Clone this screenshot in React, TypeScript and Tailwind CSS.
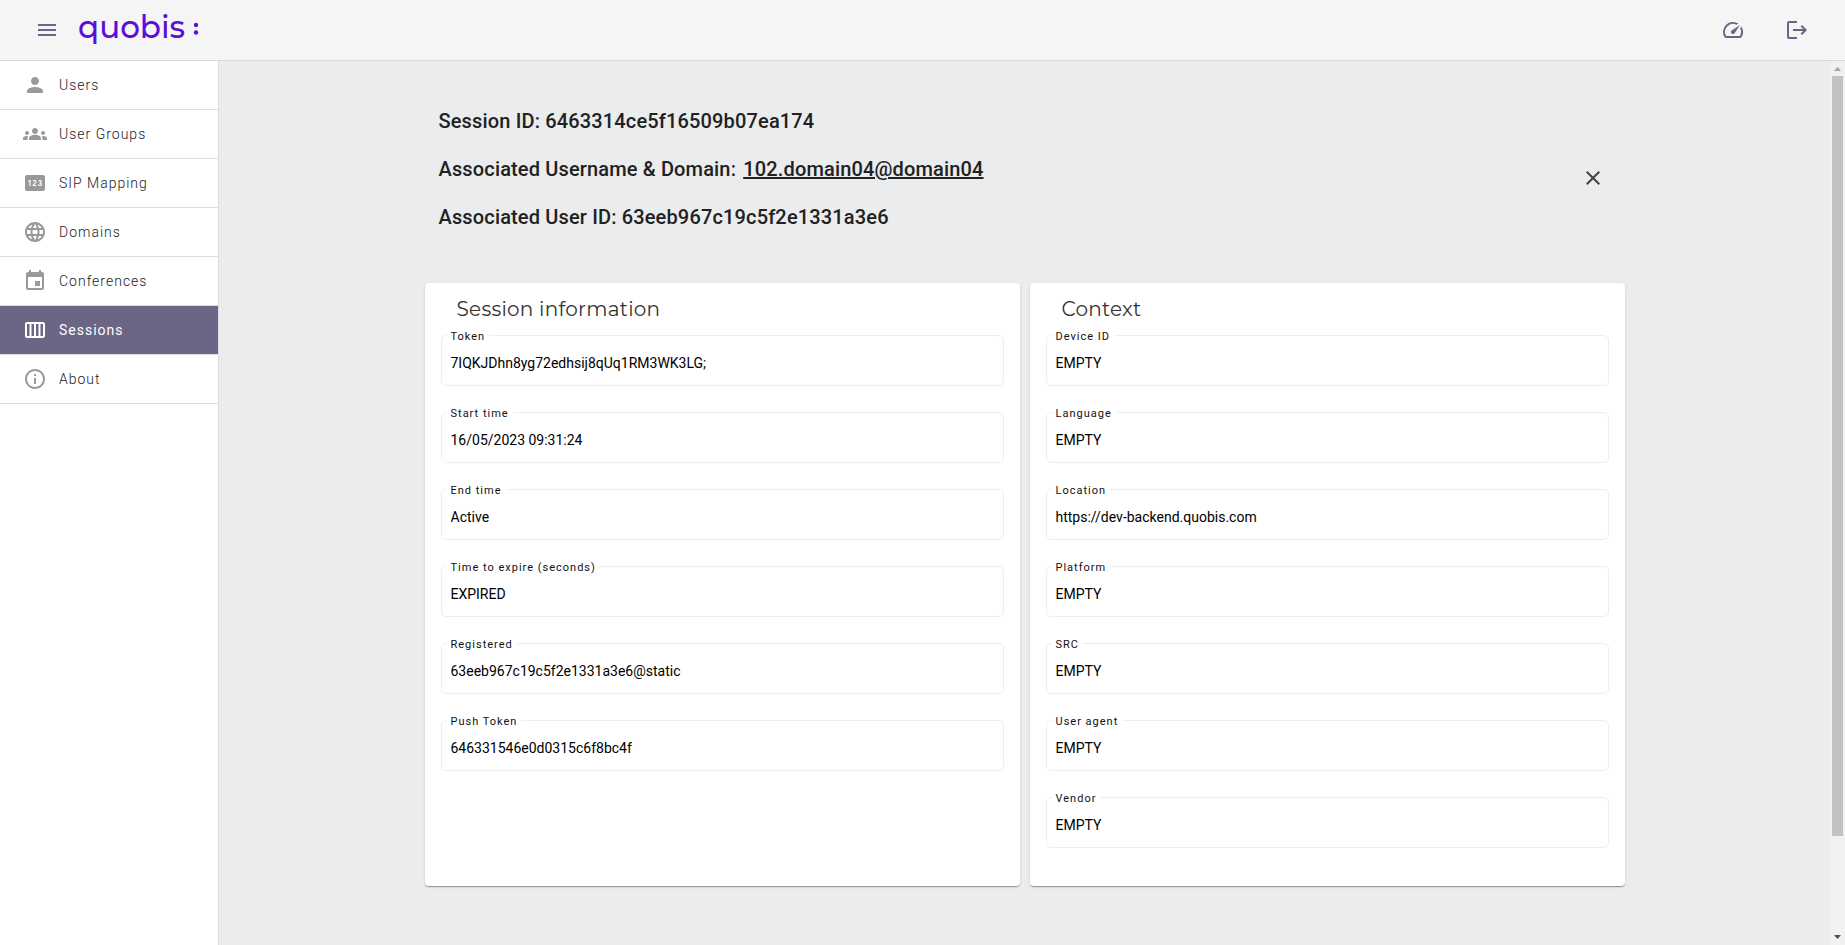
import { useId } from "react";
import type { ComponentType } from "react";
import {
  MdClose,
  MdEvent,
  MdGroups,
  MdInfoOutline,
  MdLanguage,
  MdLogout,
  MdMenu,
  MdOutlineCalendarViewWeek,
  MdPerson,
  MdPin,
  MdSpeed,
} from "react-icons/md";

type NavItem = {
  label: string;
  icon: ComponentType<{ className?: string }>;
  active?: boolean;
};

const navItems: NavItem[] = [
  { label: "Users", icon: MdPerson },
  { label: "User Groups", icon: MdGroups },
  { label: "SIP Mapping", icon: MdPin },
  { label: "Domains", icon: MdLanguage },
  { label: "Conferences", icon: MdEvent },
  { label: "Sessions", icon: MdOutlineCalendarViewWeek, active: true },
  { label: "About", icon: MdInfoOutline },
];

const sessionFields: [string, string][] = [
  ["Token", "7IQKJDhn8yg72edhsij8qUq1RM3WK3LG;"],
  ["Start time", "16/05/2023 09:31:24"],
  ["End time", "Active"],
  ["Time to expire (seconds)", "EXPIRED"],
  ["Registered", "63eeb967c19c5f2e1331a3e6@static"],
  ["Push Token", "646331546e0d0315c6f8bc4f"],
];

const contextFields: [string, string][] = [
  ["Device ID", "EMPTY"],
  ["Language", "EMPTY"],
  ["Location", "https://dev-backend.quobis.com"],
  ["Platform", "EMPTY"],
  ["SRC", "EMPTY"],
  ["User agent", "EMPTY"],
  ["Vendor", "EMPTY"],
];

function Logo() {
  return (
    <a href="#home" className="flex items-center gap-2 text-[#5b0fd8]">
      <span className="font-['Montserrat','Lato',sans-serif] text-[31px] leading-10 font-medium">quobis</span>
      <svg viewBox="0 0 6 14" className="mt-1 h-[14px] w-[6px]" fill="currentColor" aria-hidden="true">
        <circle cx="3" cy="3" r="2.2" />
        <circle cx="3" cy="10.5" r="2.2" />
      </svg>
    </a>
  );
}

function Header() {
  return (
    <header className="flex h-[61px] shrink-0 items-center border-b border-[#d8d8d9] bg-[#f5f5f5] pr-8 pl-[35px] text-[#6a6586]">
      <button type="button" aria-label="Toggle menu" className="mr-[19px]">
        <MdMenu className="size-6" />
      </button>
      <div className="pb-1.5">
        <Logo />
      </div>
      <div className="ml-auto flex items-center gap-10 pr-1">
        <button type="button" aria-label="Dashboard">
          <MdSpeed className="size-6" />
        </button>
        <button type="button" aria-label="Log out">
          <MdLogout className="size-6" />
        </button>
      </div>
    </header>
  );
}

function Sidebar() {
  return (
    <nav className="w-[219px] shrink-0 border-r border-[#dcdddd] bg-white">
      <ul>
        {navItems.map(({ label, icon: Icon, active }) => (
          <li key={label} className="border-b border-[#dcdddd]">
            <a
              href="#"
              aria-current={active ? "page" : undefined}
              className={
                active
                  ? "flex h-12 items-center gap-3 bg-[#6b6586] pl-[23px] text-sm tracking-[1px] text-white"
                  : "flex h-12 items-center gap-3 pl-[23px] text-sm font-light tracking-[1px] text-[#222222]"
              }
            >
              <Icon className={active ? "size-6 text-white" : "size-6 text-[#999999]"} />
              {label}
            </a>
          </li>
        ))}
      </ul>
    </nav>
  );
}

function Field({ label, value }: { label: string; value: string }) {
  const id = useId();
  return (
    <fieldset className="rounded-[5px] border border-[#eeeeee] px-[5px] pb-0.5">
      <legend className="px-1 pt-1 text-[11px] leading-3 tracking-[1px] text-[#111111]">
        <label htmlFor={id} className="block">
          {label}
        </label>
      </legend>
      <input
        id={id}
        readOnly
        value={value}
        className="block h-10 w-full bg-transparent px-1 text-sm text-black outline-none"
      />
    </fieldset>
  );
}

function Card({ title, fields }: { title: string; fields: [string, string][] }) {
  return (
    <section className="min-w-0 flex-1 rounded bg-white px-4 pt-[11px] pb-[38px] shadow-[0_2px_1px_-1px_rgba(0,0,0,0.2),0_1px_1px_0_rgba(0,0,0,0.14),0_1px_3px_0_rgba(0,0,0,0.12)]">
      <h2 className="mb-[3px] px-4 font-['Montserrat','Lato',sans-serif] text-xl leading-[30px] tracking-[0.0125em] text-[#333333]">
        {title}
      </h2>
      <div className="flex flex-col gap-[18px]">
        {fields.map(([label, value]) => (
          <Field key={label} label={label} value={value} />
        ))}
      </div>
    </section>
  );
}

function Scrollbar() {
  return (
    <div
      aria-hidden="true"
      className="flex w-[15px] shrink-0 flex-col items-center bg-[#f1f1f1]"
    >
      <svg viewBox="0 0 15 15" className="size-[15px] shrink-0" fill="#a3a3a3">
        <path d="M4 10h7L7.500 6z" />
      </svg>
      <div className="w-[11px] flex-[761] bg-[#c1c1c1]" />
      <div className="flex-[94]" />
      <svg viewBox="0 0 15 15" className="size-[15px] shrink-0" fill="#505050">
        <path d="M4 5h7L7.500 9z" />
      </svg>
    </div>
  );
}

export default function App() {
  return (
    <div className="flex h-screen flex-col font-['Roboto',sans-serif]">
      <Header />
      <div className="flex min-h-0 flex-1">
        <Sidebar />
        <main className="min-w-0 flex-1 overflow-y-auto bg-[#ebecee] px-4 pt-9">
          <div className="mx-auto max-w-[1200px]">
            <div className="flex items-center justify-between pr-5 pb-[42px] pl-[14px]">
              <div className="text-xl font-medium tracking-[0.0075em] text-[#212121]">
                <h1 className="leading-[48px]">Session ID: 6463314ce5f16509b07ea174</h1>
                <p className="leading-[48px]">
                  Associated Username &amp; Domain:{" "}
                  <a href="#user" className="ml-0.5 underline">
                    102.domain04@domain04
                  </a>
                </p>
                <p className="leading-[48px]">Associated User ID: 63eeb967c19c5f2e1331a3e6</p>
              </div>
              <button type="button" aria-label="Close" className="mt-[18px] text-[#444444]">
                <MdClose className="size-6" />
              </button>
            </div>
            <div className="flex gap-[10px]">
              <Card title="Session information" fields={sessionFields} />
              <Card title="Context" fields={contextFields} />
            </div>
          </div>
        </main>
        <Scrollbar />
      </div>
    </div>
  );
}
